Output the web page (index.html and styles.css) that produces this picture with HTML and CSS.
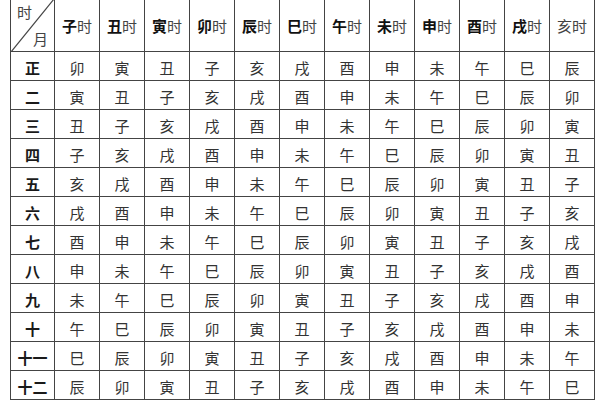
FILE: index.html
```html
<!DOCTYPE html>
<html lang="zh">
<head>
<meta charset="utf-8">
<link rel="stylesheet" href="styles.css">
</head>
<body>
<div class="table">
  <div class="cell head corner">
    <svg class="diag" width="44" height="52" viewBox="0 0 44 52"><line x1="0" y1="52" x2="43" y2="-1" stroke="#444" stroke-width="1.2"/></svg>
    <span class="c-top">时</span>
    <span class="c-bot">月</span>
  </div>
  <div class="cell head"><b>子</b>时</div>
  <div class="cell head"><b>丑</b>时</div>
  <div class="cell head"><b>寅</b>时</div>
  <div class="cell head"><b>卯</b>时</div>
  <div class="cell head"><b>辰</b>时</div>
  <div class="cell head"><b>巳</b>时</div>
  <div class="cell head"><b>午</b>时</div>
  <div class="cell head"><b>未</b>时</div>
  <div class="cell head"><b>申</b>时</div>
  <div class="cell head"><b>酉</b>时</div>
  <div class="cell head"><b>戌</b>时</div>
  <div class="cell head">亥时</div>

  <div class="cell month">正</div><div class="cell">卯</div><div class="cell">寅</div><div class="cell">丑</div><div class="cell">子</div><div class="cell">亥</div><div class="cell">戌</div><div class="cell">酉</div><div class="cell">申</div><div class="cell">未</div><div class="cell">午</div><div class="cell">巳</div><div class="cell">辰</div>
  <div class="cell month">二</div><div class="cell">寅</div><div class="cell">丑</div><div class="cell">子</div><div class="cell">亥</div><div class="cell">戌</div><div class="cell">酉</div><div class="cell">申</div><div class="cell">未</div><div class="cell">午</div><div class="cell">巳</div><div class="cell">辰</div><div class="cell">卯</div>
  <div class="cell month">三</div><div class="cell">丑</div><div class="cell">子</div><div class="cell">亥</div><div class="cell">戌</div><div class="cell">酉</div><div class="cell">申</div><div class="cell">未</div><div class="cell">午</div><div class="cell">巳</div><div class="cell">辰</div><div class="cell">卯</div><div class="cell">寅</div>
  <div class="cell month">四</div><div class="cell">子</div><div class="cell">亥</div><div class="cell">戌</div><div class="cell">酉</div><div class="cell">申</div><div class="cell">未</div><div class="cell">午</div><div class="cell">巳</div><div class="cell">辰</div><div class="cell">卯</div><div class="cell">寅</div><div class="cell">丑</div>
  <div class="cell month">五</div><div class="cell">亥</div><div class="cell">戌</div><div class="cell">酉</div><div class="cell">申</div><div class="cell">未</div><div class="cell">午</div><div class="cell">巳</div><div class="cell">辰</div><div class="cell">卯</div><div class="cell">寅</div><div class="cell">丑</div><div class="cell">子</div>
  <div class="cell month">六</div><div class="cell">戌</div><div class="cell">酉</div><div class="cell">申</div><div class="cell">未</div><div class="cell">午</div><div class="cell">巳</div><div class="cell">辰</div><div class="cell">卯</div><div class="cell">寅</div><div class="cell">丑</div><div class="cell">子</div><div class="cell">亥</div>
  <div class="cell month">七</div><div class="cell">酉</div><div class="cell">申</div><div class="cell">未</div><div class="cell">午</div><div class="cell">巳</div><div class="cell">辰</div><div class="cell">卯</div><div class="cell">寅</div><div class="cell">丑</div><div class="cell">子</div><div class="cell">亥</div><div class="cell">戌</div>
  <div class="cell month">八</div><div class="cell">申</div><div class="cell">未</div><div class="cell">午</div><div class="cell">巳</div><div class="cell">辰</div><div class="cell">卯</div><div class="cell">寅</div><div class="cell">丑</div><div class="cell">子</div><div class="cell">亥</div><div class="cell">戌</div><div class="cell">酉</div>
  <div class="cell month">九</div><div class="cell">未</div><div class="cell">午</div><div class="cell">巳</div><div class="cell">辰</div><div class="cell">卯</div><div class="cell">寅</div><div class="cell">丑</div><div class="cell">子</div><div class="cell">亥</div><div class="cell">戌</div><div class="cell">酉</div><div class="cell">申</div>
  <div class="cell month">十</div><div class="cell">午</div><div class="cell">巳</div><div class="cell">辰</div><div class="cell">卯</div><div class="cell">寅</div><div class="cell">丑</div><div class="cell">子</div><div class="cell">亥</div><div class="cell">戌</div><div class="cell">酉</div><div class="cell">申</div><div class="cell">未</div>
  <div class="cell month">十一</div><div class="cell">巳</div><div class="cell">辰</div><div class="cell">卯</div><div class="cell">寅</div><div class="cell">丑</div><div class="cell">子</div><div class="cell">亥</div><div class="cell">戌</div><div class="cell">酉</div><div class="cell">申</div><div class="cell">未</div><div class="cell">午</div>
  <div class="cell month">十二</div><div class="cell">辰</div><div class="cell">卯</div><div class="cell">寅</div><div class="cell">丑</div><div class="cell">子</div><div class="cell">亥</div><div class="cell">戌</div><div class="cell">酉</div><div class="cell">申</div><div class="cell">未</div><div class="cell">午</div><div class="cell">巳</div>
</div>
</body>
</html>
```
FILE: styles.css
```css
html, body {
  margin: 0;
  padding: 0;
  background: #fff;
  overflow: hidden;
}
body {
  width: 600px;
  height: 400px;
  font-family: "Noto Sans CJK SC", "Noto Sans", sans-serif;
  color: #333;
}
.table {
  margin-left: 10px;
  display: grid;
  grid-template-columns: 44px repeat(12, 45px);
  grid-template-rows: 52px repeat(12, 29px);
  border-left: 1px solid #444;
  width: max-content;
}
.cell {
  box-sizing: border-box;
  border-right: 1px solid #444;
  border-bottom: 1px solid #444;
  display: flex;
  align-items: center;
  justify-content: center;
  font-size: 15px;
  line-height: 1;
  padding-top: 2px;
}
.head {
  font-size: 15px;
  color: #444;
  padding-top: 0;
}
.head b {
  color: #111;
  font-weight: 700;
}
.month {
  font-weight: 700;
  color: #1a1a1a;
  font-size: 15px;
}
.corner {
  position: relative;
  display: block;
}
.diag {
  position: absolute;
  left: 0;
  top: 0;
}
.c-top {
  position: absolute;
  left: 6px;
  top: 4px;
}
.c-bot {
  position: absolute;
  left: 22px;
  top: 31px;
}
```
